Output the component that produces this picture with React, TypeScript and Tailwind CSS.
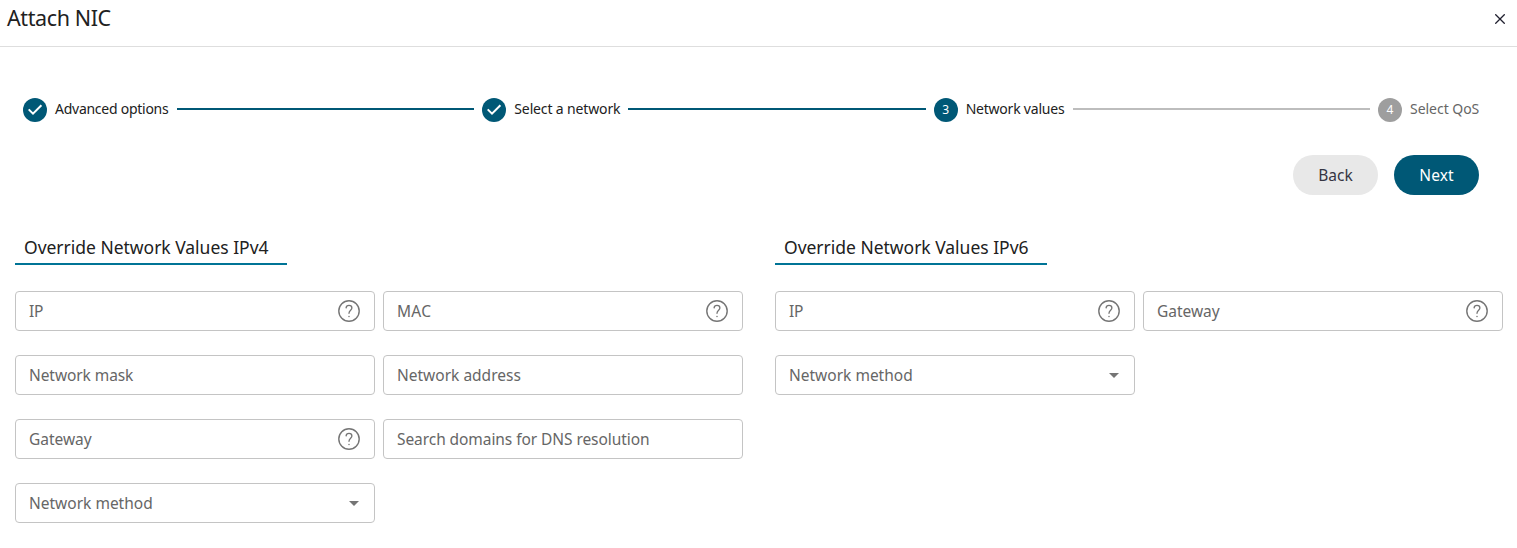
import React from "react";

function CheckBadge() {
  return (
    <svg className="h-6 w-6 shrink-0" viewBox="0 0 24 24">
      <circle cx="12" cy="12" r="12" fill="#005876" />
      <path d="M5.7 11.4l4.3 4.2 8.4-8.4" fill="none" stroke="#fff" strokeWidth="2" />
    </svg>
  );
}

function NumberBadge({ value, className }: { value: string; className: string }) {
  return (
    <span
      className={`flex h-6 w-6 shrink-0 items-center justify-center rounded-full text-[12px] leading-none text-white ${className}`}
    >
      {value}
    </span>
  );
}

function Step({ badge, label, className }: { badge: React.ReactNode; label: string; className: string }) {
  return (
    <div className="flex shrink-0 items-center gap-2">
      {badge}
      <span className={`-mt-0.5 whitespace-nowrap text-[14px] leading-5 ${className}`}>{label}</span>
    </div>
  );
}

function Connector({ className }: { className: string }) {
  return <div className={`-mt-0.5 h-0.5 min-w-0 flex-1 ${className}`} />;
}

function HelpIcon() {
  return (
    <svg className="h-6 w-6" viewBox="0 0 24 24" fill="none" stroke="#757575" strokeWidth="1.4">
      <circle cx="12" cy="12" r="10.2" />
      <path
        d="M9.1 8.9C9.2 7.3 10.4 6.4 12 6.4s2.9 1 2.9 2.5c0 2.2-2.9 2.5-2.9 5.4"
        strokeWidth="1.3"
        strokeLinecap="round"
      />
      <circle cx="12" cy="17.5" r=".75" fill="#757575" stroke="none" />
    </svg>
  );
}

function CaretIcon() {
  return (
    <svg className="h-6 w-6" viewBox="0 0 24 24" fill="#757575">
      <path d="M7 10l5 5 5-5z" />
    </svg>
  );
}

type FieldProps = { label: string; kind?: "help" | "select"; tracking: string };

function Field({ label, kind, tracking }: FieldProps) {
  return (
    <div
      className={`flex h-10 w-[360px] items-center justify-between rounded-[4px] border border-[#c4c4c4] pl-[13px] ${
        kind === "select" ? "pr-2" : "pr-[13px]"
      }`}
    >
      <span className={`whitespace-nowrap text-[15.5px] leading-6 text-[#666666] ${tracking}`}>{label}</span>
      {kind === "help" && <HelpIcon />}
      {kind === "select" && <CaretIcon />}
    </div>
  );
}

function Section({ title, fields }: { title: string; fields: FieldProps[] }) {
  return (
    <section className="w-[728px]">
      <h2 className="h-[34px] w-[272px] whitespace-nowrap border-b-2 border-[#007496] pl-[9px] text-[17.5px] leading-[32px] tracking-[-0.02px] text-[#212121]">
        {title}
      </h2>
      <div className="mt-[26px] grid grid-cols-2 gap-x-2 gap-y-6">
        {fields.map((f) => (
          <Field key={f.label} {...f} />
        ))}
      </div>
    </section>
  );
}

const ipv4: FieldProps[] = [
  { label: "IP", kind: "help", tracking: "tracking-[-0.2px]" },
  { label: "MAC", kind: "help", tracking: "tracking-[0.25px]" },
  { label: "Network mask", tracking: "tracking-[-0.08px]" },
  { label: "Network address", tracking: "tracking-[0px]" },
  { label: "Gateway", kind: "help", tracking: "tracking-[-0.03px]" },
  { label: "Search domains for DNS resolution", tracking: "tracking-[-0.07px]" },
  { label: "Network method", kind: "select", tracking: "tracking-[0px]" },
];

const ipv6: FieldProps[] = [
  { label: "IP", kind: "help", tracking: "tracking-[-0.2px]" },
  { label: "Gateway", kind: "help", tracking: "tracking-[-0.03px]" },
  { label: "Network method", kind: "select", tracking: "tracking-[0px]" },
];

export default function App() {
  return (
    <div className="h-[548px] w-full overflow-hidden bg-white font-['Noto_Sans',sans-serif]">
      <header className="flex h-[47px] items-start justify-between border-b border-[#dedede] pl-[7px] pr-3">
        <h1 className="mt-[3px] text-[21.5px] leading-[30px] tracking-[-0.4px] text-[#212121]">Attach NIC</h1>
        <button className="mt-[14px]" aria-label="Close">
          <svg className="h-[10px] w-[10px]" viewBox="0 0 10 10" stroke="#20202f" strokeWidth="1.3">
            <path d="M.3.3l9.4 9.4M9.7.3L.3 9.7" />
          </svg>
        </button>
      </header>

      <div className="mt-[51px] flex h-6 items-center gap-2 pl-[23px] pr-[38px]">
        <Step badge={<CheckBadge />} label="Advanced options" className="w-[114px] text-[#212121] tracking-[-0.26px]" />
        <Connector className="bg-[#005876]" />
        <Step badge={<CheckBadge />} label="Select a network" className="w-[106px] text-[#212121] tracking-[-0.14px]" />
        <Connector className="bg-[#005876]" />
        <Step
          badge={<NumberBadge value="3" className="bg-[#005876]" />}
          label="Network values"
          className="w-[99px] text-[#212121] tracking-[-0.22px]"
        />
        <Connector className="bg-[#bdbdbd]" />
        <Step
          badge={<NumberBadge value="4" className="bg-[#9e9e9e]" />}
          label="Select QoS"
          className="w-[69px] text-[#666666] tracking-[-0.03px]"
        />
      </div>

      <div className="mt-[33px] flex justify-end gap-4 pr-[38px] text-[15.5px] font-[450]">
        <button className="h-10 w-[85px] rounded-full bg-[#e8e8e8] pt-0.5 text-[#353542]">Back</button>
        <button className="h-10 w-[85px] rounded-full bg-[#005876] pt-0.5 tracking-[0.1px] text-white">Next</button>
      </div>

      <main className="mt-9 flex gap-8 pl-[15px]">
        <Section title="Override Network Values IPv4" fields={ipv4} />
        <Section title="Override Network Values IPv6" fields={ipv6} />
      </main>
    </div>
  );
}
